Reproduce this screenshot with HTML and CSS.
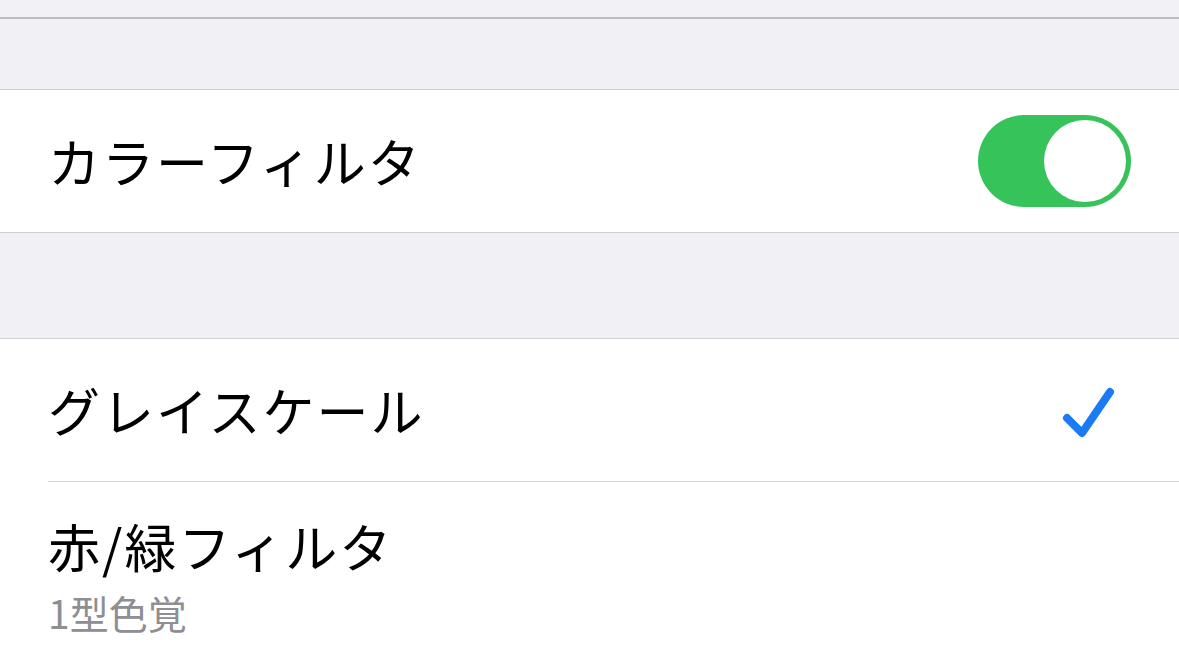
FILE: index.html
```html
<!DOCTYPE html>
<html lang="ja">
<head>
    <meta charset="UTF-8">
    <meta name="viewport" content="width=device-width, initial-scale=1.0">
    <title>カラーフィルタ</title>
    <link rel="stylesheet" href="styles.css">
</head>
<body>
    <header class="navbar"></header>

    <div class="spacer spacer-top"></div>
    <section class="group">
        <div class="row">
            <span class="row-title">カラーフィルタ</span>
            <div class="toggle on"><span class="knob"></span></div>
        </div>
    </section>

    <div class="spacer spacer-mid"></div>
    <section class="group">
        <div class="row">
            <span class="row-title">グレイスケール</span>
            <svg class="check" width="60" height="60" viewBox="0 0 60 60">
                <polyline points="8,38 23,53 51,12" fill="none" stroke="#1b7bf3" stroke-width="8" stroke-linecap="round" stroke-linejoin="round"/>
            </svg>
        </div>
        <div class="row row-sub">
            <div class="row-text">
                <div class="row-title">赤/緑フィルタ</div>
                <div class="row-subtitle">1型色覚</div>
            </div>
        </div>
    </section>
</body>
</html>
```

FILE: styles.css
```css
body {
    margin: 0;
    background-color: #f1f1f5;
    font-family: "Noto Sans CJK JP", "Noto Sans", sans-serif;
    color: #000;
    overflow: hidden;
}
.navbar {
    height: 17px;
    background-color: #f2f2f6;
    border-bottom: 2px solid #bcbcc1;
}
.spacer-top {
    height: 70px;
}
.spacer-mid {
    height: 105px;
}
.group {
    background-color: #fff;
    border-top: 1px solid #cfcfd3;
    border-bottom: 1px solid #cfcfd3;
}
.row {
    display: flex;
    align-items: center;
    justify-content: space-between;
    height: 142px;
    padding: 0 48px;
    box-sizing: border-box;
}
.row + .row {
    border-top: 1px solid #d4d4d8;
    margin-left: 48px;
    padding-left: 0;
    height: 190px;
}
.row-title {
    font-size: 52px;
    line-height: 62px;
    letter-spacing: 2px;
}
.row-sub {
    align-items: flex-start;
    padding-top: 33px;
}
.row-subtitle {
    font-size: 39px;
    line-height: 46px;
    color: #8e8e93;
    margin-top: 12px;
}
.toggle {
    width: 153px;
    height: 92px;
    border-radius: 46px;
    background-color: #36c35a;
    display: flex;
    align-items: center;
    justify-content: flex-end;
    padding: 0 5px;
    box-sizing: border-box;
}
.knob {
    width: 82px;
    height: 82px;
    border-radius: 50%;
    background-color: #fff;
}
.check {
    margin-right: 12px;
}
```
